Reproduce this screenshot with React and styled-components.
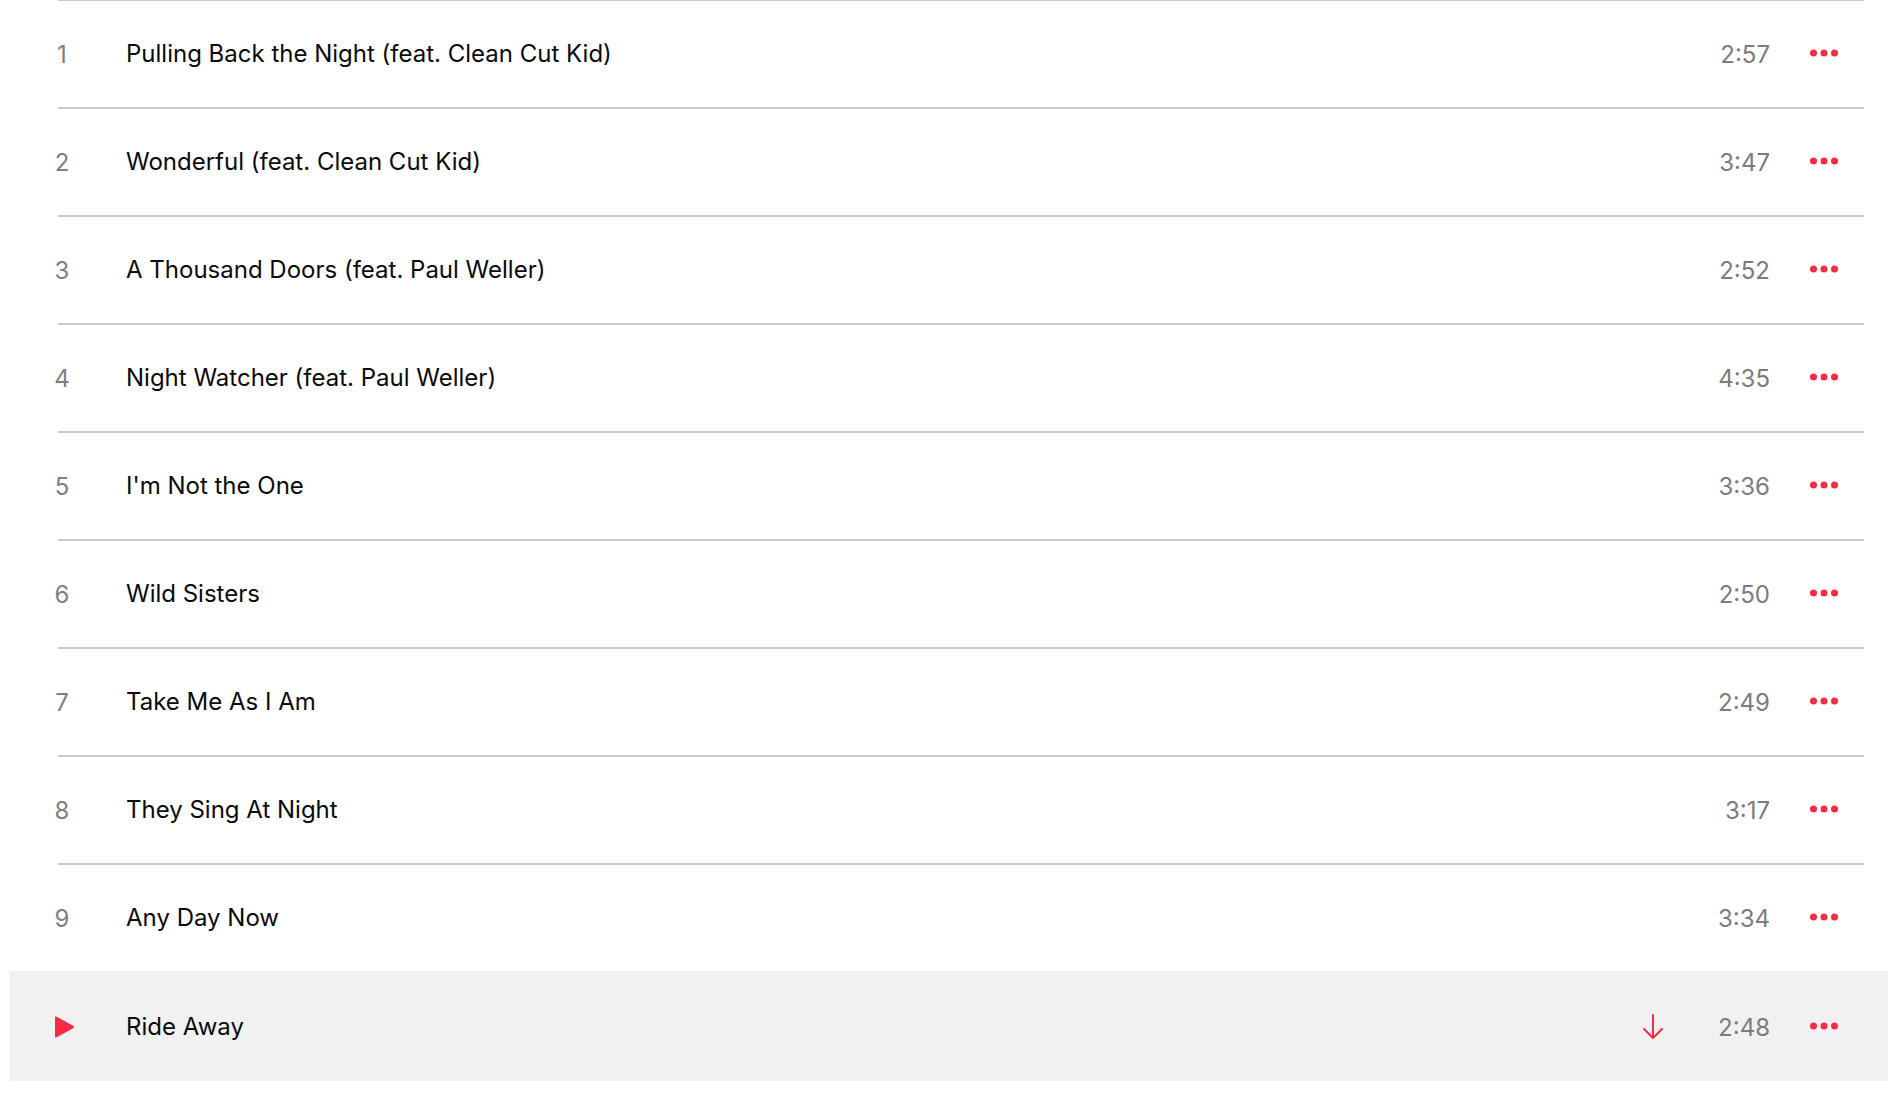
import styled, { createGlobalStyle } from "styled-components";

const tracks = [
  { title: "Pulling Back the Night (feat. Clean Cut Kid)", time: "2:57" },
  { title: "Wonderful (feat. Clean Cut Kid)", time: "3:47" },
  { title: "A Thousand Doors (feat. Paul Weller)", time: "2:52" },
  { title: "Night Watcher (feat. Paul Weller)", time: "4:35" },
  { title: "I'm Not the One", time: "3:36" },
  { title: "Wild Sisters", time: "2:50" },
  { title: "Take Me As I Am", time: "2:49" },
  { title: "They Sing At Night", time: "3:17" },
  { title: "Any Day Now", time: "3:34" },
  { title: "Ride Away", time: "2:48", active: true },
];

const GlobalStyle = createGlobalStyle`
  html, body {
    margin: 0;
    background: #fff;
    font-family: Inter, "Liberation Sans", sans-serif;
  }
`;

const TrackList = styled.ol`
  list-style: none;
  margin: -1px 0 0;
  padding: 0 16px 0 10px;
`;

const Row = styled.li`
  position: relative;
  display: grid;
  grid-template-columns: 116px 1fr 48px 93px 118px;
  align-items: center;
  height: ${(p) => (p.$active ? "110px" : "108px")};
  background: ${(p) => (p.$active ? "#f1f1f1" : "transparent")};

  &::before {
    content: "";
    display: ${(p) => (p.$active ? "none" : "block")};
    position: absolute;
    top: 0;
    left: 48px;
    right: 24px;
    height: 2px;
    background: #cbcbcb;
  }
`;

const Index = styled.span`
  justify-self: start;
  width: 30px;
  margin: 2px 0 0 37px;
  text-align: center;
  font-size: 24px;
  color: #808080;
`;

const Title = styled.span`
  font-size: 24px;
  color: #0a0a0a;
  white-space: nowrap;
`;

const Duration = styled.span`
  justify-self: end;
  margin-top: 2px;
  font-size: 24px;
  color: #7c7c7c;
`;

const More = styled.svg`
  display: block;
  justify-self: end;
  margin-right: 50px;
`;

const PlayIcon = styled.svg`
  display: block;
  margin: 2px 0 0 45px;
`;

const DownloadIcon = styled.svg`
  display: block;
  justify-self: center;
  margin-top: 2px;
`;

const App = () => (
  <>
    <GlobalStyle />
    <TrackList>
      {tracks.map((t, i) => (
        <Row key={t.title} $active={t.active}>
          {t.active ? (
            <PlayIcon width="20" height="22" viewBox="0 0 20 22">
              <path
                d="M1.2 0.6 L18.6 10 Q19.6 11 18.6 12 L1.2 21.4 Q0 21.8 0 20.6 V1.4 Q0 0.2 1.2 0.6 Z"
                fill="#fa2a45"
              />
            </PlayIcon>
          ) : (
            <Index>{i + 1}</Index>
          )}
          <Title>{t.title}</Title>
          {t.active ? (
            <DownloadIcon width="22" height="26" viewBox="0 0 22 26" fill="none">
              <path
                d="M11 1 V24 M2 15 L11 24 L20 15"
                stroke="#fa2a45"
                strokeWidth="2"
                strokeLinecap="round"
                strokeLinejoin="round"
              />
            </DownloadIcon>
          ) : (
            <span />
          )}
          <Duration>{t.time}</Duration>
          <More width="28" height="8" viewBox="0 0 28 8">
            <circle cx="3.5" cy="4" r="3.5" fill="#fa2a45" />
            <circle cx="14" cy="4" r="3.5" fill="#fa2a45" />
            <circle cx="24.5" cy="4" r="3.5" fill="#fa2a45" />
          </More>
        </Row>
      ))}
    </TrackList>
  </>
);

export default App;
